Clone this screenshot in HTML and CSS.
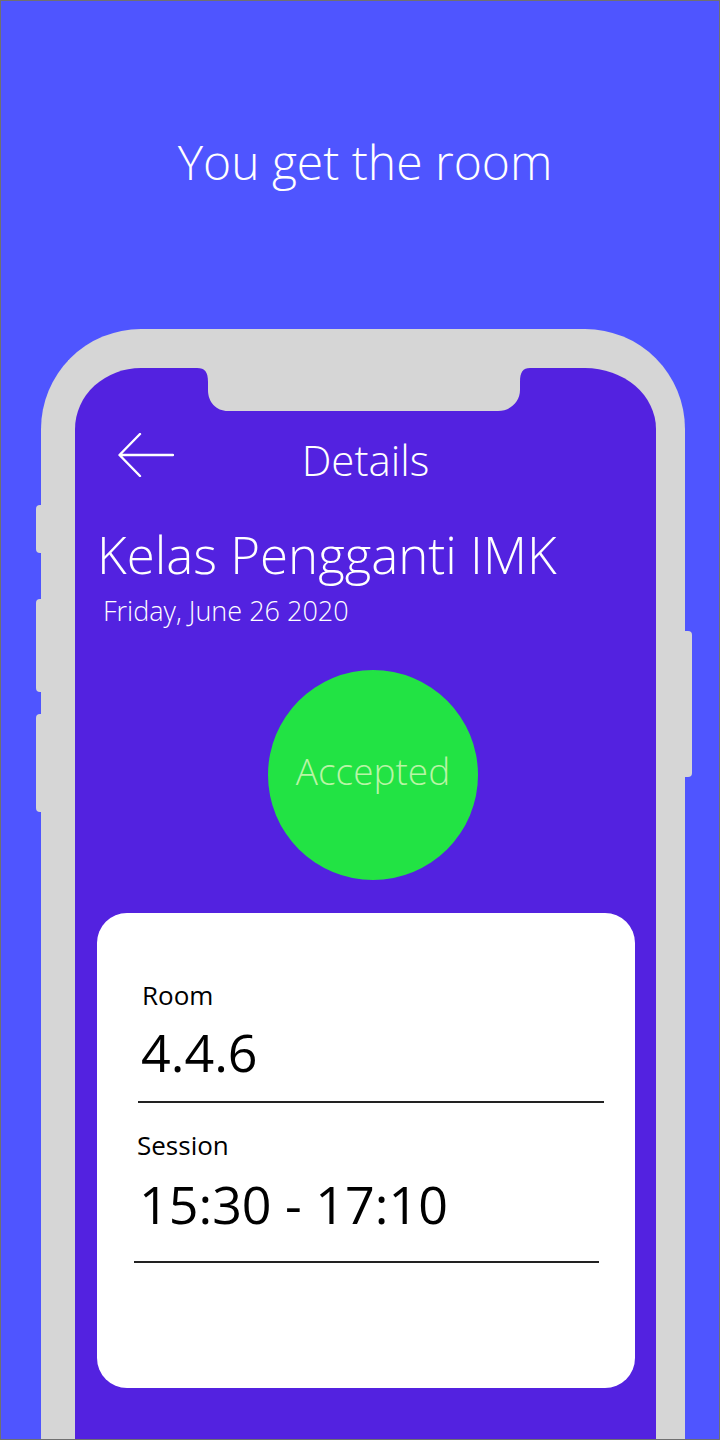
FILE: index.html
```html
<!DOCTYPE html>
<html>

<head>
	<title>You get the room</title>
	<link rel="stylesheet" href="styles.css">
</head>

<body>
	<div class="page">
		<h1 class="headline">You get the room</h1>

		<div class="phone">
			<span class="side-btn btn-1"></span>
			<span class="side-btn btn-2"></span>
			<span class="side-btn btn-3"></span>
			<span class="side-btn btn-power"></span>

			<svg class="notch" width="333" height="43" viewBox="0 0 333 43">
				<path d="M0,0 C8,0 11,4 11,14 L11,22 C11,34 19,43 31,43 L301,43 C313,43 323,34 323,22 L323,14 C323,4 326,0 333,0 Z" fill="#d6d6d6" />
			</svg>

			<div class="screen">
				<div class="topbar">
					<svg class="back" width="56" height="44" viewBox="0 0 56 44">
						<path d="M55,22 H2 M22,1 L1.5,22 L22,43" fill="none" stroke="#fff" stroke-width="2.4" stroke-linecap="round" stroke-linejoin="round" />
					</svg>
					<h2 class="topbar-title">Details</h2>
				</div>

				<h3 class="event-name">Kelas Pengganti IMK</h3>
				<p class="event-date">Friday, June 26 2020</p>

				<div class="status">Accepted</div>

				<div class="card">
					<div class="field">
						<p class="field-label">Room</p>
						<p class="field-value">4.4.6</p>
					</div>
					<div class="field field-session">
						<p class="field-label">Session</p>
						<p class="field-value">15:30 - 17:10</p>
					</div>
				</div>
			</div>
		</div>
	</div>
</body>

</html>
```

FILE: styles.css
```css
body {
	margin: 0;
	padding: 0;
	font-family: "Open Sans", "Noto Sans", sans-serif;
}

.page {
	box-sizing: border-box;
	width: 720px;
	height: 1440px;
	border: 1px solid #707070;
	background-color: #4f55ff;
	overflow: hidden;
}

.headline {
	margin: 0;
	padding-top: 128px;
	padding-left: 10px;
	font-size: 48px;
	font-weight: 300;
	line-height: 66px;
	color: #fff;
	text-align: center;
}

.phone {
	position: relative;
	box-sizing: border-box;
	width: 644px;
	height: 1200px;
	margin-top: 134px;
	margin-left: 40px;
	border-style: solid;
	border-color: #d6d6d6;
	border-width: 39px 29px 0 34px;
	border-radius: 100px 100px 0 0;
	background-color: #5322e0;
}

.side-btn {
	position: absolute;
	background-color: #d6d6d6;
	border-radius: 4px;
}

.btn-1 {
	left: -39px;
	top: 137px;
	width: 10px;
	height: 48px;
}

.btn-2 {
	left: -39px;
	top: 231px;
	width: 10px;
	height: 93px;
}

.btn-3 {
	left: -39px;
	top: 346px;
	width: 10px;
	height: 98px;
}

.btn-power {
	right: -36px;
	top: 263px;
	width: 12px;
	height: 146px;
}

.notch {
	position: absolute;
	left: 122px;
	top: 0;
	display: block;
}

.screen {
	color: #fff;
}

.topbar {
	position: relative;
	display: flex;
	align-items: center;
	justify-content: center;
	height: 60px;
	padding-top: 62px;
}

.back {
	position: absolute;
	left: 43px;
	top: 65px;
	display: block;
}

.topbar-title {
	margin: 0;
	font-size: 42px;
	font-weight: 300;
	line-height: 60px;
}

.event-name {
	margin: 32px 0 0 22px;
	font-size: 51px;
	font-weight: 300;
	line-height: 64px;
}

.event-date {
	margin: 7px 0 0 28px;
	font-size: 27px;
	font-weight: 300;
	line-height: 36px;
}

.status {
	box-sizing: border-box;
	display: flex;
	align-items: center;
	justify-content: center;
	width: 210px;
	height: 210px;
	margin: 41px 0 0 193px;
	padding-bottom: 10px;
	border-radius: 50%;
	background-color: #22e344;
	color: #b9f5a6;
	font-size: 37px;
	font-weight: 300;
}

.card {
	box-sizing: border-box;
	width: 538px;
	height: 475px;
	margin: 33px 0 0 22px;
	padding: 64px 31px 0 41px;
	background-color: #fff;
	border-radius: 30px;
	color: #000;
}

.field {
	border-bottom: 2px solid #222;
	padding-bottom: 14px;
}

.field-label {
	margin: 0 0 0 4px;
	font-size: 26px;
	line-height: 36px;
}

.field-value {
	margin: 4px 0 0 3px;
	font-size: 52px;
	line-height: 70px;
}

.field-session {
	margin: 24px 5px 0 -4px;
	padding-bottom: 22px;
}

.field-session .field-label {
	margin-left: 3px;
}

.field-session .field-value {
	margin-top: 6px;
	margin-left: 5px;
}
```
